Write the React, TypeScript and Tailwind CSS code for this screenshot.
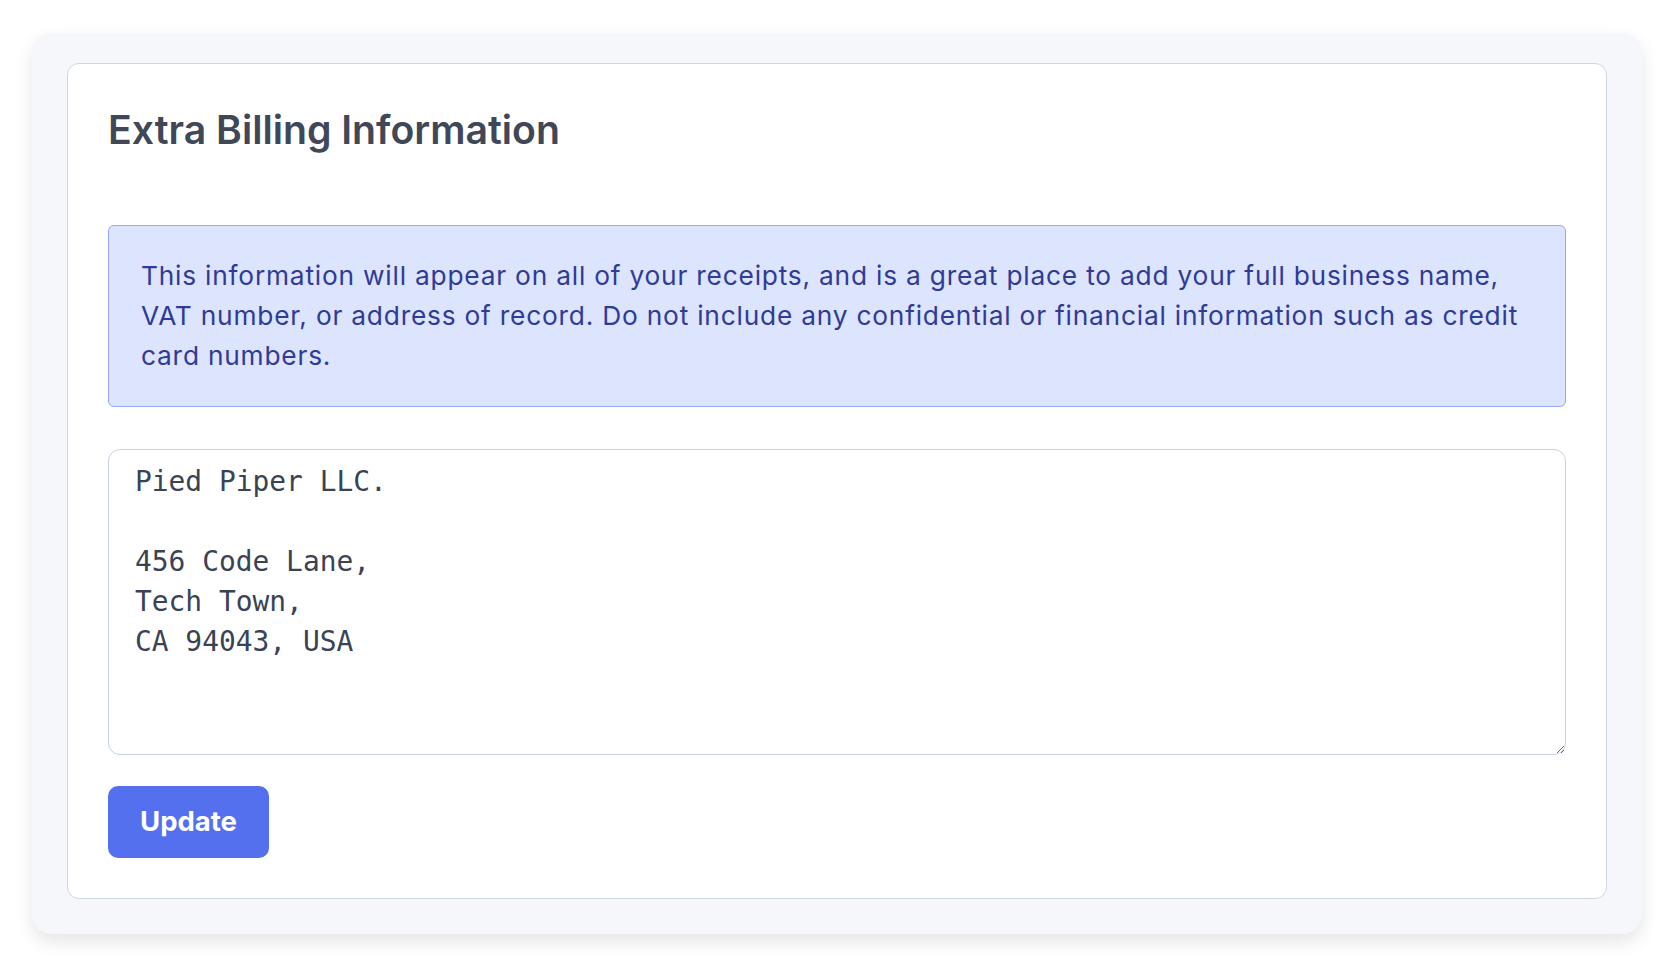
import { useState } from "react";

const initialAddress = `Pied Piper LLC.

456 Code Lane,
Tech Town,
CA 94043, USA`;

export default function App() {
  const [extra, setExtra] = useState(initialAddress);

  return (
    <div className="min-h-screen bg-white p-[32px] pt-[33px] font-['Inter',sans-serif]">
      <div className="rounded-[20px] bg-[#f6f7fb] px-[35px] pt-[30px] pb-[35px] shadow-[0_8px_18px_rgba(0,0,0,0.10)]">
        {/* Card */}
        <div className="rounded-[12px] border border-[#cdd8e4] bg-white px-[40px] pt-[40px] pb-[40px]">
          <h2 className="text-[39.2px] leading-[52px] font-semibold text-[#404857]">
            Extra Billing Information
          </h2>

          <div className="mt-[69px] rounded-[6px] border border-[#98a8f6] bg-[#dde4fd] px-[32px] py-[30px]">
            <p className="text-[26.3px] leading-[40px] tracking-[0.03em] text-[#2f3b96]">
              This information will appear on all of your receipts, and is a great place to add your full
              business name, VAT number, or address of record. Do not include any confidential or financial
              information such as credit card numbers.
            </p>
          </div>

          <textarea
            value={extra}
            onChange={(e) => setExtra(e.target.value)}
            className="mt-[42px] block h-[306px] w-full rounded-[12px] border border-[#c5d2e0] bg-white px-[26px] py-[12px] font-['DejaVu_Sans_Mono',monospace] text-[27.9px] leading-[40px] text-[#3a4354] outline-none"
          />

          <button className="mt-[31px] h-[72px] rounded-[10px] bg-[#5570ef] px-[32px] text-[27.5px] font-bold text-white">
            Update
          </button>
        </div>
      </div>
    </div>
  );
}
